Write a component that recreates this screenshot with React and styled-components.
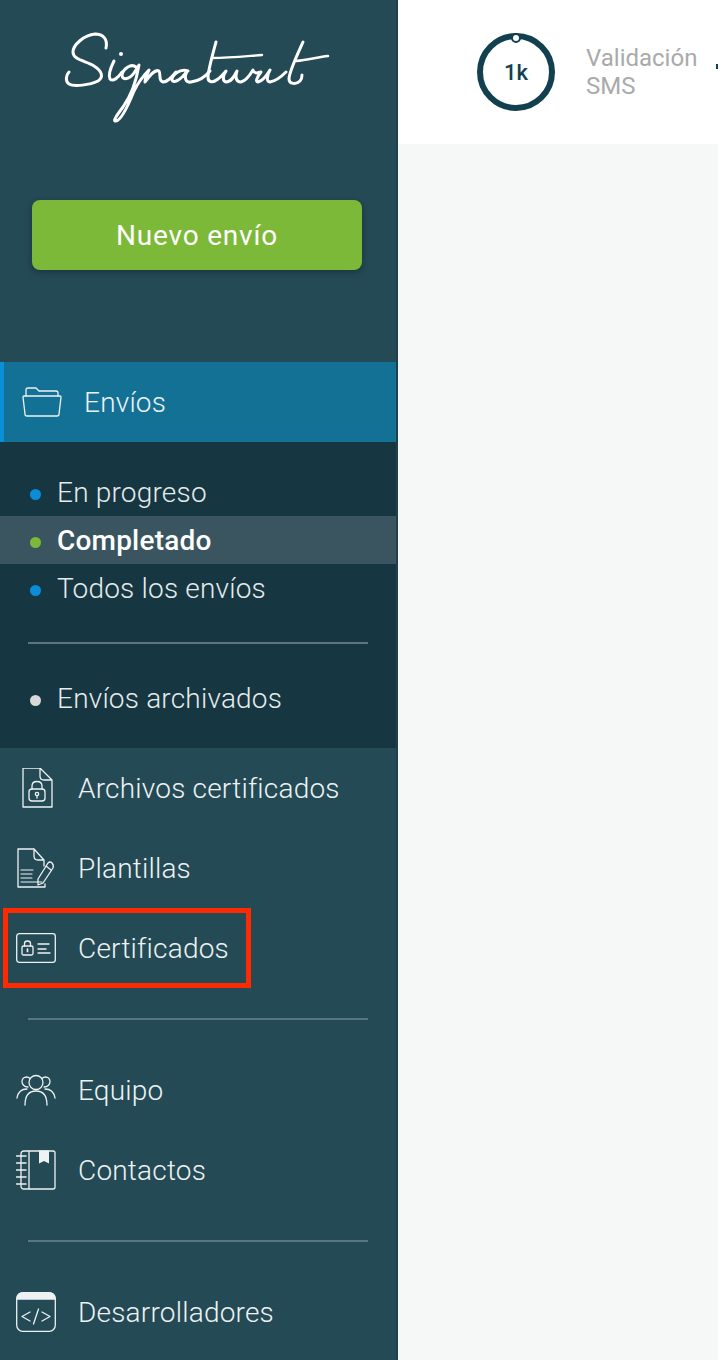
import styled, { createGlobalStyle } from 'styled-components';

const GlobalStyle = createGlobalStyle`
  html, body {
    margin: 0;
    padding: 0;
    background: #f6f8f8;
  }
  *, *::before, *::after {
    box-sizing: border-box;
  }
`

const Logo = () => (
  <LogoSvg viewBox="0 0 280 100" role="img" aria-label="Signaturit">
    <g fill="none" stroke="#fff" strokeWidth="3" strokeLinecap="round" strokeLinejoin="round">
      <path d="M46 23 C48 14 43 9 35 9 C24 10 13 20 13 27 C13 35 26 36 34 41 C42 46 44 52 38 56 C30 60 14 62 9 59 C5 56 6 50 9 47" />
      <path d="M54 36 C51 42 48 50 50 54 C53 57 58 53 62 47" />
      <path d="M76 42 C71 38 63 44 62 50 C62 56 70 54 74 48 L79 40 C77 52 73 68 63 82 C57 90 52 97 56 96 C62 95 70 76 74 66 C78 58 84 50 89 45 C87 49 85 54 85 57 C90 50 95 44 99 46 C101 48 98 56 103 57 C108 57 112 52 116 47" />
      <path d="M128 46 C120 43 112 50 112 55 C113 59 121 55 127 46 C124 52 125 58 131 57 C139 56 146 51 150 46" />
      <path d="M156 17 C153 28 148 46 148 52 C148 58 153 58 158 54 C161 52 164 48 166 46 C163 50 162 56 166 57 C171 57 174 52 177 46 C175 52 176 57 181 57 C186 56 190 50 193 45 C194 49 198 48 201 47 C197 52 195 57 198 57 C203 56 207 50 210 45 C207 50 206 57 210 57 C216 56 222 51 226 47" />
      <path d="M152 33 C170 33 188 31 202 30" strokeWidth="2.400" />
      <path d="M243 17 C238 28 229 47 229 54 C229 59 236 60 240 56 C242 54 242 52 242 50" />
      <path d="M236 36 C248 35 258 32 268 31" strokeWidth="2.400" />
    </g>
    <circle cx="61" cy="29" r="2" fill="#fff" />
  </LogoSvg>
);

const FolderIcon = () => (
  <IconSvg viewBox="0 0 40 30">
    <path d="M4 9 V3 Q4 1 6 1 H14 L17 4 H34 Q36 4 36 6 V9" />
    <path d="M1 10 Q1 9 2 9 H38 Q39 9 39 10 L37 27 Q37 29 35 29 H5 Q3 29 3 27 Z" />
  </IconSvg>
);

const LockedFileIcon = () => (
  <IconSvg viewBox="0 0 40 40">
    <path d="M24 0 H7 V39 H36 V12 Z M24 0 V8 Q24 12 28 12 H36" />
    <rect x="13" y="21" width="16" height="12" rx="3" />
    <path d="M16 21 V18 Q16 13.500 21 13.500 Q26 13.500 26 18 V21" />
    <circle cx="21" cy="26" r="1.700" />
    <path d="M21 27.500 V30" />
  </IconSvg>
);

const TemplateIcon = () => (
  <IconSvg viewBox="0 0 40 40">
    <path d="M18 1 H2 V39 H29 V36 M18 1 V8 Q18 12 22 12 H28 M18 1 L28 12 V18" />
    <path d="M5 22 H17 M5 26 H16 M5 30 H16 M5 34 H26" strokeWidth="1.100" />
    <path d="M22 31 L32 15 Q34 13 36 15 Q38 17 37 20 L27 35 L22 37 Z M30 18 L35 22" />
  </IconSvg>
);

const CardIcon = () => (
  <IconSvg viewBox="0 0 40 30">
    <rect x="0.700" y="0.700" width="38.600" height="28.600" rx="2.500" />
    <rect x="6" y="13" width="11" height="9" rx="1.500" />
    <path d="M8.500 13 V10.500 Q8.500 8 11.500 8 Q14.500 8 14.500 10.500 V13" />
    <path d="M11.500 16 V18.500" strokeWidth="1.700" />
    <path d="M22 11 H33 M22 16 H30 M22 20 H34" />
  </IconSvg>
);

const TeamIcon = () => (
  <IconSvg viewBox="0 0 40 32">
    <circle cx="20" cy="8.500" r="7" />
    <path d="M9 31 C9 22 12 17 20 17 C28 17 31 22 31 31" />
    <path d="M12 13 C8 13 6 10 6 7.500 C6 5 8 3 10.500 3 C12 3 13 3.500 14 4.500" />
    <path d="M28 13 C32 13 34 10 34 7.500 C34 5 32 3 29.500 3 C28 3 27 3.500 26 4.500" />
    <path d="M1 24 C2 18 5 15 11 15" />
    <path d="M39 24 C38 18 35 15 29 15" />
  </IconSvg>
);

const NotebookIcon = () => (
  <IconSvg viewBox="0 0 40 40">
    <path d="M5 4 Q5 1 8 1 H37 Q39 1 39 3 V37 Q39 39 37 39 H8 Q5 39 5 36 Z M13 1 V39" />
    <path d="M0.500 6 H10 M0.500 13 H10 M0.500 20 H10 M0.500 27 H10 M0.500 34 H10" strokeWidth="1.500" />
    <path d="M23 0.500 H33 V13.500 L28 11 L23 13.500 Z" fill="#eef2f3" stroke="none" />
  </IconSvg>
);

const CodeIcon = () => (
  <IconSvg viewBox="0 0 40 40">
    <rect x="0.700" y="0.700" width="38.600" height="38.600" rx="6" />
    <path d="M1 7 Q1 1 7 1 H33 Q39 1 39 7 Z" fill="#eef2f3" />
    <path d="M14 20 L6 24.500 L14 29 M26 20 L34 24.500 L26 29 M22.500 17 L17.500 32" />
  </IconSvg>
);

const App = () => {
  return (
    <>
      <GlobalStyle />
      <Page>
        <Sidebar>
          <LogoArea>
            <Logo />
          </LogoArea>
          <NewButton>Nuevo envío</NewButton>
          <ActiveItem>
            <FolderIcon />
            <span>Envíos</span>
          </ActiveItem>
          <SubMenu>
            <SubItem><Dot $color="#0a8dd9" />En progreso</SubItem>
            <SubItem $selected><Dot $color="#7cb938" />Completado</SubItem>
            <SubItem><Dot $color="#0a8dd9" />Todos los envíos</SubItem>
            <Divider />
            <SubItem><Dot $color="#d9d9d9" />Envíos archivados</SubItem>
          </SubMenu>
          <NavItem><LockedFileIcon />Archivos certificados</NavItem>
          <NavItem><TemplateIcon />Plantillas</NavItem>
          <NavItem $marked><CardIcon />Certificados</NavItem>
          <Divider />
          <NavItem><TeamIcon />Equipo</NavItem>
          <NavItem><NotebookIcon />Contactos</NavItem>
          <Divider />
          <NavItem><CodeIcon />Desarrolladores</NavItem>
        </Sidebar>
        <Main>
          <TopBar>
            <Ring>
              <Knob />
              1k
            </Ring>
            <RingLabel>Validación<br />SMS</RingLabel>
            <NextRing />
          </TopBar>
        </Main>
      </Page>
    </>
  )
}

export default App

const Page = styled.div`
  display: grid;
  grid-template-columns: 398px 1fr;
  height: 1360px;
  overflow: hidden;
  font-family: Roboto, "Liberation Sans", sans-serif;
`
const Sidebar = styled.aside`
  background: #244a56;
  border-right: 2px solid #1e414d;
  color: #eef2f3;
  font-weight: 300;
  font-size: 28px;
  letter-spacing: 0.2px;
`
const LogoArea = styled.div`
  height: 200px;
  padding: 25px 0 0 60px;
`
const LogoSvg = styled.svg`
  display: block;
  width: 280px;
  height: 100px;
`
const NewButton = styled.button`
  display: block;
  width: 330px;
  height: 70px;
  margin: 0 0 92px 32px;
  border: none;
  border-radius: 8px;
  background: #7cb938;
  box-shadow: 0 2px 6px rgba(0, 0, 0, 0.3);
  color: #fff;
  font-family: inherit;
  font-size: 28px;
  font-weight: 400;
  letter-spacing: 0.8px;
`
const IconSvg = styled.svg`
  flex: none;
  width: 40px;
  fill: none;
  stroke: #eef2f3;
  stroke-width: 1.300;
  stroke-linecap: round;
  stroke-linejoin: round;
`
const ActiveItem = styled.div`
  display: flex;
  align-items: center;
  gap: 22px;
  height: 80px;
  padding-left: 18px;
  border-left: 4px solid #0a8fd8;
  background: #147196;
`
const SubMenu = styled.div`
  padding: 26px 0;
  background: #163641;
`
const SubItem = styled.div`
  display: flex;
  align-items: center;
  gap: 16px;
  height: 48px;
  padding-left: 30px;
  background: ${(props) => (props.$selected ? '#3a5560' : 'transparent')};
  color: ${(props) => (props.$selected ? '#fff' : '#e6ebec')};
  font-weight: ${(props) => (props.$selected ? 500 : 300)};
`
const Dot = styled.span`
  flex: none;
  width: 11px;
  height: 11px;
  margin-top: 5px;
  border-radius: 50%;
  background: ${(props) => props.$color};
`
const Divider = styled.hr`
  width: 340px;
  height: 2px;
  margin: 30px 0 30px 28px;
  border: none;
  background: #5b7680;
`
const NavItem = styled.div`
  position: relative;
  display: flex;
  align-items: center;
  gap: 22px;
  height: 80px;
  padding-left: 16px;

  ${(props) => props.$marked && `
    &::after {
      content: "";
      position: absolute;
      top: 0;
      left: 3px;
      width: 248px;
      height: 80px;
      border: 5px solid #ff2a00;
    }
  `}
`
const Main = styled.main`
  background: #f6f8f8;
`
const TopBar = styled.header`
  display: flex;
  align-items: center;
  height: 144px;
  padding-left: 79px;
  background: #fff;
  overflow: hidden;
`
const Ring = styled.div`
  position: relative;
  display: flex;
  flex: none;
  align-items: center;
  justify-content: center;
  width: 78px;
  height: 78px;
  border: 6px solid #12404f;
  border-radius: 50%;
  color: #12404f;
  font-size: 22px;
  font-weight: 500;
`
const Knob = styled.span`
  position: absolute;
  top: -6px;
  left: 28px;
  width: 10px;
  height: 10px;
  border: 2px solid #12404f;
  border-radius: 50%;
  background: #fff;
`
const RingLabel = styled.div`
  flex: none;
  margin-left: 31px;
  color: #aaaaaa;
  font-size: 24px;
  line-height: 28px;
`
const NextRing = styled.span`
  flex: none;
  width: 2px;
  height: 5px;
  margin: -12px 0 0 19px;
  background: #12404f;
`
